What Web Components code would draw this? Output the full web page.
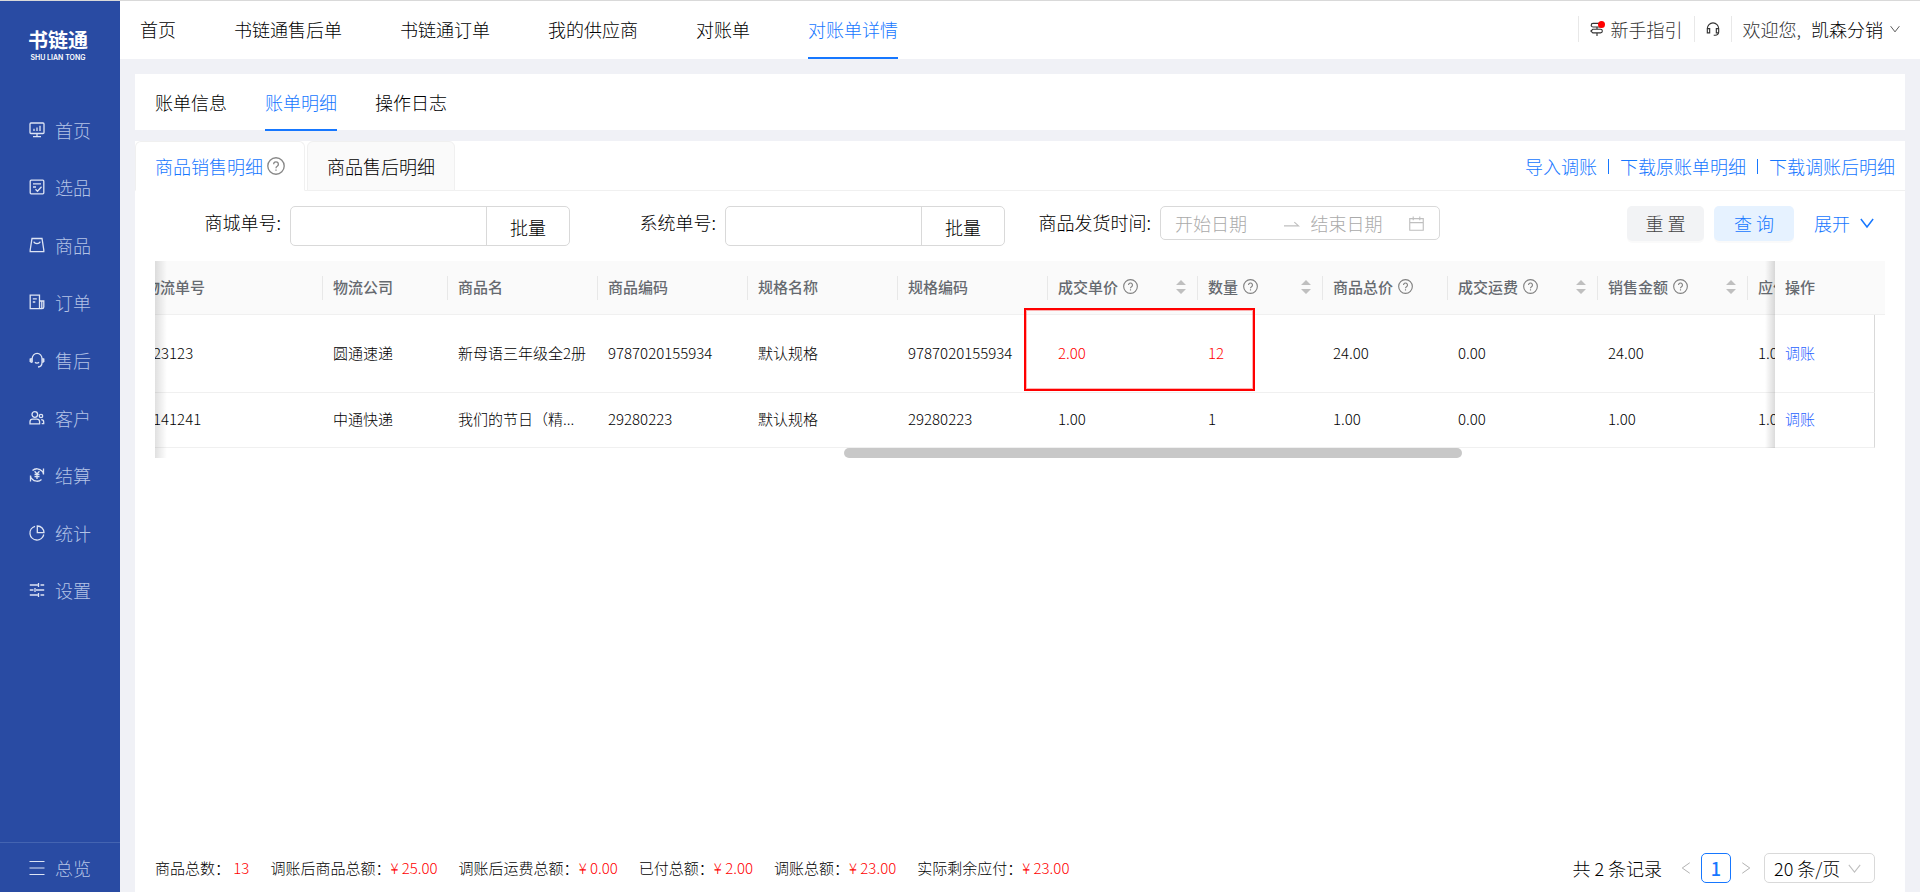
<!DOCTYPE html>
<html lang="zh-CN">
<head>
<meta charset="utf-8">
<meta name="viewport" content="width=device-width, initial-scale=1">
<title>对账单详情 - 书链通</title>
<style>
  html { --blue: #1677ff; --line: #f0f0f0; --bg: #f0f1f6; --red: #f00; }
  body {
    margin: 0;
    font: 300 18px/24px "Noto Sans CJK SC", "Noto Sans", sans-serif;
    color: #000;
    background: var(--bg);
  }
</style>
</head>
<body>
<app-shell>
  <side-bar slot="side"></side-bar>
  <top-bar slot="top"></top-bar>
  <sub-tabs></sub-tabs>
  <bill-panel>
    <filter-bar></filter-bar>
    <bill-table></bill-table>
    <bill-footer slot="footer"></bill-footer>
  </bill-panel>
</app-shell>

<script>
const define = (name, html, setup) => {
  const tpl = document.createElement('template');
  tpl.innerHTML = '<style>*{box-sizing:border-box}a{color:inherit;text-decoration:none}button,input,select{font:inherit;color:inherit;margin:0}</style>' + html;
  customElements.define(name, class extends HTMLElement {
    constructor() {
      super();
      this.attachShadow({ mode: 'open' }).append(tpl.content.cloneNode(true));
    }
    connectedCallback() { if (setup) setup(this, this.shadowRoot); }
  });
};

/* Icons, each drawn on a 16 x 16 grid */
const ICONS = {
  home: '<rect x="1" y="1" width="14" height="10.5" rx="1"/><path d="M8 11.5v3M4 14.7h8M5 9V6.8M8 9V5.5M11 9V3.8"/>',
  select: '<rect x="1.2" y="1.2" width="13.6" height="13.6" rx="1"/><path d="M4 4.8h8M4 8h3M6.5 10.2l2 2 4-4.4"/>',
  goods: '<path d="M3 1.5h10l1.8 11.5v1.6H1.2V13z"/><path d="M4.8 4.6c.6 2.6 5.8 2.6 6.400 0"/>',
  order: '<path d="M10.500 14.700V1.200H1.200v13.500h11.800c1 0 1.800-.8 1.800-1.800V7h-4.300M12.800 7v7M3.800 4.800h4M3.800 8h2.500"/>',
  service: '<path d="M3.200 10.500V6.500a4.900 5.200 0 0 1 9.800 0v4c0 2.600-1.500 4.300-4 4.500M6 10.300c1 1 3 1 4 0"/><path d="M1.200 6.500v3.500M14.800 6.500v3.500M2.200 6v5M13.900 6v5"/>',
  client: '<circle cx="5.800" cy="4.500" r="2.800"/><path d="M1 13.800v-2c0-1.700 1-2.700 2.700-2.700h4.200c1.700 0 2.700 1 2.700 2.700v2z"/><circle cx="12" cy="6" r="1.700"/><path d="M12.200 9.700c1.600 0 2.500.8 2.500 2.200v1.800h-2"/>',
  settle: '<path d="M3.500 3.500A6.500 6.500 0 0 1 13 4.200M12.500 12.500A6.500 6.500 0 0 1 3 11.800M1.500 14.500V8.500c0 2 .7 3 2 4M14.500 1.500v6c0-2-.7-3-2-4"/><path d="M5.600 4.300 8 7l2.400-2.700M8 7v5M5.500 7.500h5M5.500 9.700h5"/>',
  chart: '<path d="M6 1.300a7 7 0 1 0 8.800 8.200"/><path d="M8.300 1v6.700H15C15 4 12.300 1 8.300 1z"/>',
  tune: '<path d="M.8 3h8M11.500 3h3.700M.8 8h3.700M7 8h8.200M.8 13h8M11.500 13h3.700M9.500 1v4M6 6v4M9.500 11v4"/>',
  menu: '<path d="M.5 1.500h15M.5 8h15M.5 14.500h15"/>',
  help: '<circle cx="8" cy="8" r="7.300"/><path d="M5.900 6.400a2.100 2.100 0 1 1 3.200 1.800c-.8.5-1.100.9-1.100 1.700M8 11v1.200"/>',
  guide: '<path d="M3.500 1.500h9.300L15 3.600l-2.200 2.100H3.500A2.100 2.100 0 0 1 3.500 1.500zM8 5.700v2.600M8 12.500V16M3.200 8.300h8.800a2.100 2.100 0 0 1 0 4.200H3.200L1 10.400z"/>',
  headset: '<path d="M1.500 11V7.500a6.500 6.500 0 0 1 13 0v4c0 2.200-1.600 3.700-4 3.700H8.800M1.500 7.500h2.700v5H1.500zM14.500 7.500h-2.700v5h2.700"/>',
  down: '<path d="M1 3.500 8 12.500l7-9"/>',
  left: '<path d="M13 1 3 8l10 7"/>',
  right: '<path d="M3 1l10 7-10 7"/>',
  calendar: '<path d="M.8 2.800h14.400v12.400H.8zM.8 7h14.400M4.500.5v4M11.500.5v4"/>',
  arrow: '<path d="M0 10.500h15.500L11 6.500"/>'
};
customElements.define('ui-icon', class extends HTMLElement {
  static get observedAttributes() { return ['name']; }
  constructor() { super(); this.attachShadow({ mode: 'open' }); }
  attributeChangedCallback(attr, old, name) {
    this.shadowRoot.innerHTML = `<style>:host{display:inline-flex;flex:none;width:16px;height:16px}svg{width:100%;height:100%;overflow:visible;fill:none;stroke:currentColor;stroke-width:var(--w,1.300)}</style>
      <svg viewBox="0 0 16 16" aria-hidden="true">${ICONS[name] || ''}</svg>`;
  }
});

define('app-shell', `<style>
  :host{display:grid;grid-template-columns:120px minmax(0,1fr);min-height:100vh;box-sizing:border-box;border-top:1px solid #d9d9d9}
  .right{display:flex;flex-direction:column;min-width:0}
  main{flex:1;display:flex;flex-direction:column;gap:11px;padding:15px 15px 0}
</style>
<slot name="side"></slot>
<div class="right"><slot name="top"></slot><main><slot></slot></main></div>`);

define('side-item', `<style>
  :host{display:flex}
  a{flex:1;display:flex;align-items:center;gap:10px;padding-left:29px;color:#b4c3e6}
  ui-icon{color:#dde4f4}
</style><a href="#"><ui-icon></ui-icon><slot></slot></a>`,
  (el, root) => root.querySelector('ui-icon').setAttribute('name', el.getAttribute('icon')));

define('side-bar', `<style>
  :host{display:flex;flex-direction:column;background:#294ba3;color:#fff}
  .logo{padding:25px 4px 0 0;height:100px;text-align:center;font-weight:700;font-size:20px;line-height:28px}
  small{display:block;font:600 7px/8px Inter,sans-serif}
  nav{display:grid;grid-auto-rows:1fr;min-height:518px}
  .all{margin-top:auto;height:50px;border-top:1px solid #4464b1;display:grid}
  .all side-item{--w:1}
</style>
<div class="logo">书链通<small>SHU LIAN TONG</small></div>
<nav>
  <side-item icon="home">首页</side-item><side-item icon="select">选品</side-item><side-item icon="goods">商品</side-item>
  <side-item icon="order">订单</side-item><side-item icon="service">售后</side-item><side-item icon="client">客户</side-item>
  <side-item icon="settle">结算</side-item><side-item icon="chart">统计</side-item><side-item icon="tune">设置</side-item>
</nav>
<div class="all"><side-item icon="menu">总览</side-item></div>`);

define('top-bar', `<style>
  :host{display:flex;height:58px;background:#fff;padding:0 20px;justify-content:space-between}
  nav{display:flex;gap:58px}
  nav a{height:58px;line-height:56px;border-bottom:2px solid transparent}
  nav a[aria-current]{color:var(--blue);border-color:var(--blue)}
  .user{display:flex;height:26px;margin-top:15px;line-height:26px;color:#333}
  .user>*{display:flex;align-items:center;border:0;border-left:1px solid #e8e8e8;background:none;padding:0 11px;white-space:pre}
  .user>:last-child{padding-right:0}
  .guide{gap:7px}
  .mark{position:relative;display:flex}
  .mark::after{content:"";position:absolute;right:-1px;top:-1px;width:7px;height:7px;border-radius:50%;background:#f00}
  ui-icon{width:14px;height:14px}
  b{font-weight:inherit;color:#000;margin:0 7px 0 10px}
  .user ui-icon.down{width:10px;height:10px}
</style>
<nav><a href="#">首页</a><a href="#">书链通售后单</a><a href="#">书链通订单</a><a href="#">我的供应商</a><a href="#">对账单</a><a href="#" aria-current="page">对账单详情</a></nav>
<div class="user">
  <a class="guide" href="#"><span class="mark"><ui-icon name="guide"></ui-icon></span>新手指引</a>
  <button aria-label="客服"><ui-icon name="headset"></ui-icon></button>
  <button>欢迎您,<b>凯森分销</b><ui-icon class="down" name="down"></ui-icon></button>
</div>`);

define('sub-tabs', `<style>
  :host{display:flex;gap:38px;height:56px;padding:0 20px;background:#fff}
  a{height:57px;line-height:56px;border-bottom:2px solid transparent}
  a[aria-current]{color:var(--blue);border-color:var(--blue)}
</style>
<a href="#">账单信息</a><a href="#" aria-current="page">账单明细</a><a href="#">操作日志</a>`);

define('bill-panel', `<style>
  :host{flex:1;display:flex;flex-direction:column;min-width:0;background:#fff}
  header{display:flex;height:50px;padding-right:10px;gap:2px;border-bottom:1px solid var(--line)}
  header>button{display:flex;align-items:center;gap:4px;height:50px;padding:0 19px;border:1px solid var(--line);border-radius:6px 6px 0 0;background:#fafafa}
  header>button.on{color:var(--blue);background:#fff;border-bottom-color:#fff}
  header ui-icon{width:18px;height:18px;color:#888;--w:1.2}
  .links{margin-left:auto;display:flex;align-items:center;gap:11px;color:var(--blue)}
  .links i{width:1px;height:15px;margin-top:2px;background:var(--blue)}
  .body{flex:1;padding:15px 20px 0}
</style>
<header>
  <button class="on">商品销售明细<ui-icon name="help"></ui-icon></button><button>商品售后明细</button>
  <div class="links"><a href="#">导入调账</a><i></i><a href="#">下载原账单明细</a><i></i><a href="#">下载调账后明细</a></div>
</header>
<div class="body"><slot></slot></div>
<slot name="footer"></slot>`);

define('search-field', `<style>
  :host{display:flex}
  label{width:126px;margin-right:9px;text-align:right;line-height:32px}
  div{display:flex;width:280px;height:40px;border:1px solid #d9d9d9;border-radius:5px}
  input{flex:1;min-width:0;border:0;outline:0;background:none;padding:0 10px}
  button{width:83px;border:0;border-left:1px solid #d9d9d9;background:none;padding:2px 0 0}
</style>
<label for="q"><slot></slot></label><div><input id="q"><button>批量</button></div>`);

define('filter-bar', `<style>
  :host{display:grid;grid-template-columns:415px 415px 415px minmax(0,1fr);gap:20px}
  .date{display:flex}
  label{width:126px;margin-right:9px;text-align:right;line-height:32px}
  .range{display:flex;align-items:center;width:280px;height:34px;border:1px solid #d9d9d9;border-radius:5px;padding:0 15px 0 14px;color:#bfbfbf}
  .range ui-icon{width:15px;height:15px;--w:1.200}
  .range ui-icon[name=arrow]{margin:0 12px 0 10px}
  input{flex:1;min-width:0;width:0;height:30px;padding:0;border:0;outline:0;background:none}
  input::placeholder{color:#aaa;opacity:1}
  .act{display:flex;justify-content:flex-end;gap:10px;padding-right:11px}
  button{height:35px;border:0;border-radius:5px;padding:0 0 2px;background:none;box-shadow:0 2px 0 rgba(0,0,0,.02)}
  .reset{width:77px;background:#f2f3f5;color:#444}
  .go{width:80px;background:#e6f2ff;color:var(--blue)}
  .more{display:flex;align-items:center;gap:10px;margin-left:10px;color:var(--blue);box-shadow:none}
  .more ui-icon{width:14px;height:14px;--w:1.700}
</style>
<search-field>商城单号:</search-field>
<search-field>系统单号:</search-field>
<div class="date"><label for="from">商品发货时间:</label>
  <div class="range"><input id="from" placeholder="开始日期"><ui-icon name="arrow"></ui-icon><input aria-label="结束日期" placeholder="结束日期"><ui-icon name="calendar"></ui-icon></div></div>
<div class="act"><button class="reset">重 置</button><button class="go">查 询</button><button class="more">展开<ui-icon name="down"></ui-icon></button></div>`);

define('sort-head', `<style>
  :host{display:flex;align-items:center;gap:5px}
  ui-icon{width:15px;height:15px;color:#808080;--w:1.200}
  svg{margin-left:auto;width:10px;height:14px;fill:#bfbfbf}
  :host([plain]) svg{display:none}
</style><slot></slot><ui-icon name="help"></ui-icon><svg viewBox="0 0 10 14" aria-hidden="true"><path d="M0 5 5 0l5 5zM0 9l5 5 5-5z"/></svg>`);

define('bill-table', `<style>
  :host{display:block;position:relative;margin-top:15px;font-size:15px}
  .view{overflow:hidden}
  table{width:calc(100% + 20px);margin-left:-20px;table-layout:fixed;border-collapse:separate;border-spacing:0}
  th,td{padding:0 11px 2px;text-align:left;white-space:nowrap;overflow:hidden;border-bottom:1px solid var(--line);background:#fff}
  th:first-child,td:first-child,.op{padding-left:10px}
  td:nth-child(3){padding-right:0}
  th{height:54px;font-weight:500;color:#666a70;background:#fafafa}
  th:not(:first-child):not(.op):not(.gut){background:linear-gradient(#e8e8e8,#e8e8e8) 0 50%/1px 24px no-repeat #fafafa}
  tr.a td{height:78px} tr.b td{height:55px}
  tr>.due{padding-right:0}
  .hot{color:#f00}
  tr>.op,tr>.gut{position:sticky;right:10px;overflow:visible}
  .op::before{content:"";position:absolute;right:100%;top:0;bottom:-1px;width:10px;background:linear-gradient(to left,rgba(0,0,0,.14),rgba(0,0,0,0))}
  td.op{border-right:1px solid #d9d9d9;color:#1f62ff}
  tr>.gut{right:0;padding:0}
  td.gut{border:0}
  .shade{position:absolute;left:0;top:0;bottom:0;width:12px;background:linear-gradient(to right,rgba(0,0,0,.12),rgba(0,0,0,0))}
  .bar{height:10px;display:grid;grid-template-columns:689fr 618fr 423fr}
  .bar i{grid-column:2;border-radius:5px;background:#c8c8c8}
  .note{position:absolute;left:869px;top:47px;width:231px;height:83px;border:2px solid #f00;outline:1px solid rgba(255,0,0,.3);outline-offset:-3px}
</style>
<div class="view"><table>
<colgroup><col style="width:187px"><col style="width:125px"><col style="width:150px"><col style="width:150px"><col style="width:150px"><col style="width:150px"><col style="width:150px"><col style="width:125px"><col style="width:125px"><col style="width:150px"><col style="width:150px"><col><col style="width:100px"><col style="width:10px"></colgroup>
<thead><tr><th>物流单号</th><th>物流公司</th><th>商品名</th><th>商品编码</th><th>规格名称</th><th>规格编码</th>
<th><sort-head>成交单价</sort-head></th><th><sort-head>数量</sort-head></th><th><sort-head plain>商品总价</sort-head></th><th><sort-head>成交运费</sort-head></th><th><sort-head>销售金额</sort-head></th><th class="due">应付</th><th class="op">操作</th><th class="gut"></th></tr></thead>
<tbody>
<tr class="a"><td>123123</td><td>圆通速递</td><td>新母语三年级全2册</td><td>9787020155934</td><td>默认规格</td><td>9787020155934</td><td class="hot">2.00</td><td class="hot">12</td><td>24.00</td><td>0.00</td><td>24.00</td><td class="due">1.00</td><td class="op"><a href="#">调账</a></td><td class="gut"></td></tr>
<tr class="b"><td>4141241</td><td>中通快递</td><td>我们的节日（精...</td><td>29280223</td><td>默认规格</td><td>29280223</td><td>1.00</td><td>1</td><td>1.00</td><td>0.00</td><td>1.00</td><td class="due">1.00</td><td class="op"><a href="#">调账</a></td><td class="gut"></td></tr>
</tbody></table></div>
<div class="bar"><i></i></div>
<div class="shade"></div><div class="note"></div>`);

define('bill-footer', `<style>
  :host{display:flex;align-items:center;justify-content:space-between;height:48px;padding:0 30px 0 20px}
  .sum{display:flex;gap:21px;font-size:15px;white-space:pre}
  b{font-weight:inherit;color:var(--red)}
  .page{display:flex;align-items:center}
  .page button{display:flex;align-items:center;justify-content:center;height:30px;width:30px;padding:0;border:0;background:none;color:#b0b0b0}
  .page ui-icon{width:12px;height:12px}
  .page .cur{border:1px solid var(--blue);border-radius:5px;color:var(--blue);font-weight:500}
  .total{margin-right:9px}
  .size{position:relative;display:flex;align-items:center;margin-left:3px;width:111px}
  select{appearance:none;width:100%;height:30px;padding:0 0 0 9px;border:1px solid #d9d9d9;border-radius:5px;background:#fff}
  .size ui-icon{position:absolute;right:14px;width:13px;height:13px;color:#bfbfbf}
</style>
<div class="sum"><span>商品总数：<b> 13</b></span><span>调账后商品总额：<b>¥ 25.00</b></span><span>调账后运费总额：<b>¥ 0.00</b></span><span>已付总额：<b>¥ 2.00</b></span><span>调账总额：<b>¥ 23.00</b></span><span>实际剩余应付：<b>¥ 23.00</b></span></div>
<div class="page"><span class="total">共 2 条记录</span><button aria-label="上一页"><ui-icon name="left"></ui-icon></button><button class="cur">1</button><button aria-label="下一页"><ui-icon name="right"></ui-icon></button>
<span class="size"><select aria-label="每页条数"><option>20 条/页</option></select><ui-icon name="down"></ui-icon></span></div>`);
</script>
</body>
</html>
